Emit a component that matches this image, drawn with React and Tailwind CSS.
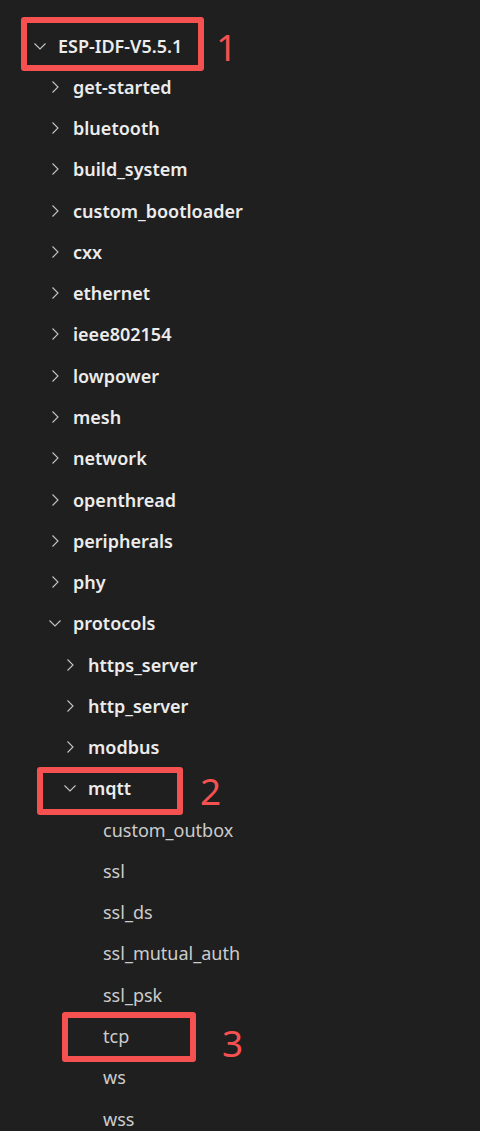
const tree = [
  { name: "ESP-IDF-V5.5.1", level: 0, open: true },
  { name: "get-started", level: 1 },
  { name: "bluetooth", level: 1 },
  { name: "build_system", level: 1 },
  { name: "custom_bootloader", level: 1 },
  { name: "cxx", level: 1 },
  { name: "ethernet", level: 1 },
  { name: "ieee802154", level: 1 },
  { name: "lowpower", level: 1 },
  { name: "mesh", level: 1 },
  { name: "network", level: 1 },
  { name: "openthread", level: 1 },
  { name: "peripherals", level: 1 },
  { name: "phy", level: 1 },
  { name: "protocols", level: 1, open: true },
  { name: "https_server", level: 2 },
  { name: "http_server", level: 2 },
  { name: "modbus", level: 2 },
  { name: "mqtt", level: 2, open: true },
  { name: "custom_outbox", level: 3, file: true },
  { name: "ssl", level: 3, file: true },
  { name: "ssl_ds", level: 3, file: true },
  { name: "ssl_mutual_auth", level: 3, file: true },
  { name: "ssl_psk", level: 3, file: true },
  { name: "tcp", level: 3, file: true },
  { name: "ws", level: 3, file: true },
  { name: "wss", level: 3, file: true },
];

const indent = ["pl-[32px]", "pl-[47px]", "pl-[62px]", "pl-[77px]"];

function Chevron({ open }) {
  return (
    <svg className="w-4 h-4 shrink-0" viewBox="0 0 16 16" fill="none" stroke="#c5c5c5" strokeWidth="1.1">
      {open ? <polyline points="2.5,5.5 8,11 13.5,5.5" /> : <polyline points="5.5,2.5 11,8 5.5,13.5" />}
    </svg>
  );
}

function Row({ item }) {
  return (
    <div className={`flex items-center h-[41.28px] gap-[10px] ${indent[item.level]}`}>
      {item.file ? <span className="w-4 shrink-0" /> : <Chevron open={item.open} />}
      <span
        className={
          item.file
            ? "text-[18px] text-[#cccccc] font-normal leading-none"
            : "text-[18px] text-[#ececec] font-semibold leading-none"
        }
      >
        {item.name}
      </span>
    </div>
  );
}

export default function App() {
  return (
    <div className="relative w-[480px] h-[1131px] overflow-hidden bg-[#1f1f1f] font-['Noto_Sans',sans-serif]">
      <div className="pt-[25px] flex flex-col">
        {tree.map((item) => (
          <Row key={item.name} item={item} />
        ))}
      </div>

      {/* annotations */}
      <div className="absolute left-[21px] top-[17px] w-[183px] h-[54px] border-[6px] border-[#f55151] rounded-[3px]" />
      <div className="absolute left-[37px] top-[767px] w-[146px] h-[48px] border-[6px] border-[#f55151] rounded-[3px]" />
      <div className="absolute left-[62px] top-[1012px] w-[134px] h-[50px] border-[6px] border-[#f55151] rounded-[3px]" />
      <span className="absolute left-[216px] top-[28px] text-[37px] leading-none text-[#f55151]">1</span>
      <span className="absolute left-[200px] top-[772px] text-[37px] leading-none text-[#f55151]">2</span>
      <span className="absolute left-[222px] top-[1024px] text-[37px] leading-none text-[#f55151]">3</span>
    </div>
  );
}
